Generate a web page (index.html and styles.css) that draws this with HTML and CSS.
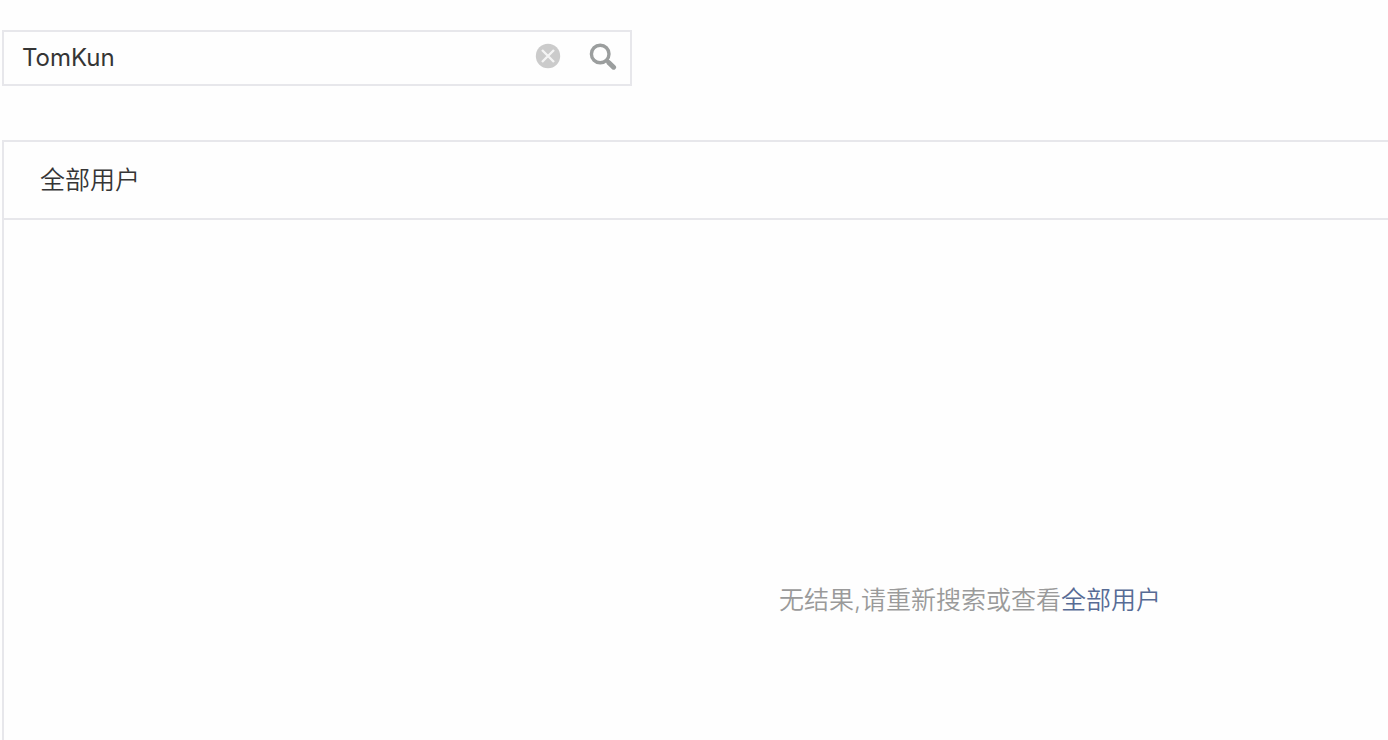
FILE: index.html
```html
<!DOCTYPE html>
<html lang="zh-CN">
<head>
  <meta charset="UTF-8">
  <meta name="viewport" content="width=device-width, initial-scale=1.0">
  <title>全部用户</title>
  <link rel="stylesheet" href="styles.css">
</head>
<body>
  <form class="search">
    <input type="text" class="search-input" id="keyword" aria-label="搜索用户" value="TomKun">
    <button type="reset" class="search-btn" aria-label="清除">
      <svg width="26" height="26" viewBox="0 0 26 26">
        <circle cx="13" cy="13" r="12.2" fill="#cbcbcb"/>
        <path d="M7 7l12 12M19 7l-12 12" stroke="#f4f4f4" stroke-width="2.4"/>
      </svg>
    </button>
    <button type="submit" class="search-btn" aria-label="搜索">
      <svg width="28" height="28" viewBox="0 0 28 28" fill="none" stroke="#9b9e9e">
        <circle cx="11.2" cy="12" r="8.8" stroke-width="3.4"/>
        <path d="M17.4 18.2l3 3" stroke-width="4"/>
        <path d="M20.2 21l4.4 4.2" stroke-width="5" stroke-linecap="round"/>
      </svg>
    </button>
  </form>

  <div class="panel">
    <h1 class="panel-title">全部用户</h1>
    <p class="empty">无结果,请重新搜索或查看<a href="#">全部用户</a></p>
  </div>
</body>
</html>
```

FILE: styles.css
```css
* {
  box-sizing: border-box;
}
body {
  margin: 0;
  padding: 30px 0 0 2px;
  min-height: 100vh;
  display: flex;
  flex-direction: column;
  background: #fefefe;
  color: #353535;
  font-family: Inter, "Noto Sans CJK SC", sans-serif;
  font-size: 25px;
  font-weight: 350;
}
.search {
  display: flex;
  align-items: center;
  gap: 28px;
  width: 100%;
  max-width: 630px;
  height: 56px;
  padding: 0 13px 4px 18px;
  border: 2px solid #e7e7eb;
}
.search-input {
  flex: 1;
  min-width: 0;
  padding: 2px 0 0;
  border: 0;
  background: none;
  color: inherit;
  font: inherit;
  font-size: 24px;
  font-weight: 400;
}
.search-btn {
  display: flex;
  padding: 0;
  border: 0;
  background: none;
  cursor: pointer;
}

/* open on the right and at the bottom */
.panel {
  flex: 1;
  margin-top: 54px;
  border: 2px solid #e7e7eb;
  border-width: 2px 0 0 2px;
}
.panel-title {
  margin: 0;
  padding: 0 36px;
  border-bottom: 2px solid #e7e7eb;
  font-size: 25px;
  font-weight: 350;
  line-height: 76px;
}
.empty {
  margin: 0;
  padding: 360px 0 100px 56%;
  color: #9a9a9a;
  line-height: 40px;
}
.empty a {
  color: #576b95;
  text-decoration: none;
}
```
